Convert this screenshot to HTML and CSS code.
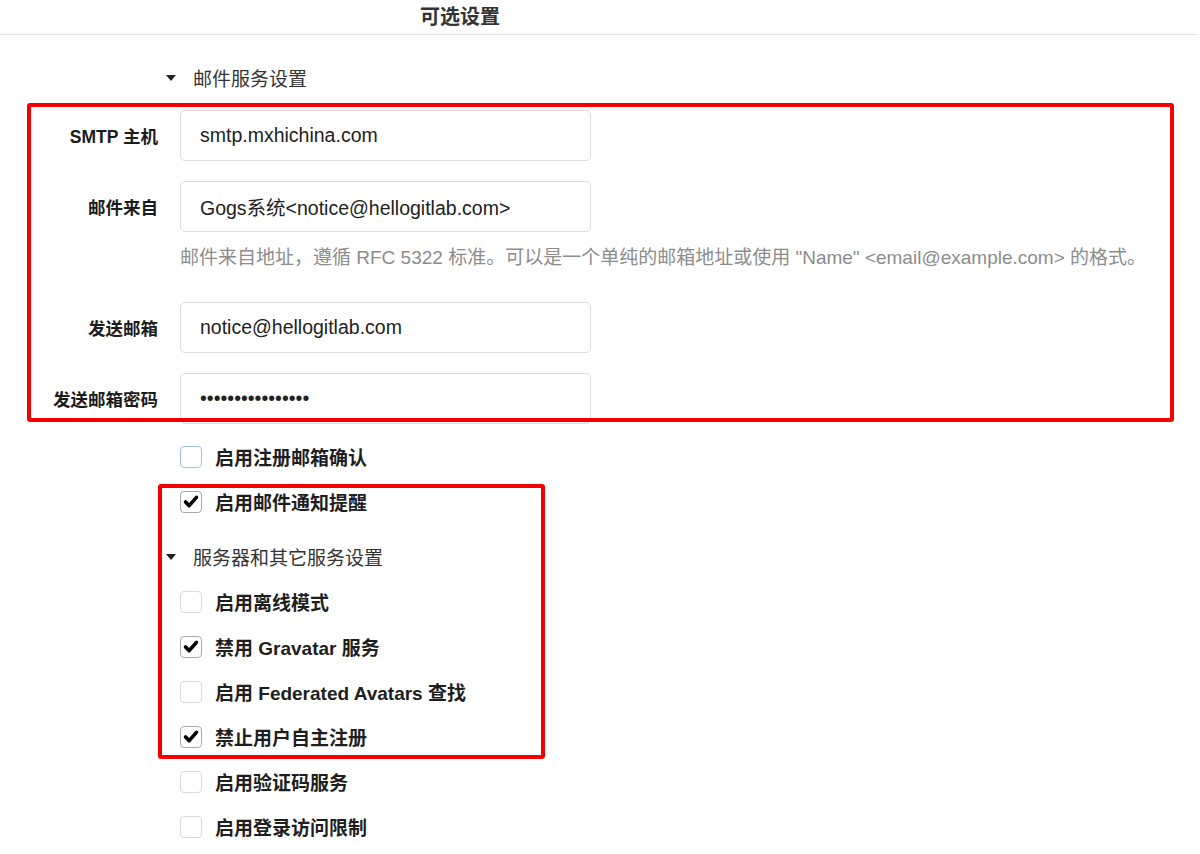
FILE: index.html
```html
<!DOCTYPE html>
<html lang="zh-CN">

<head>
    <meta charset="UTF-8">
    <meta name="viewport" content="width=device-width, initial-scale=1.0">
    <title>可选设置</title>
    <link rel="stylesheet" href="styles.css">
</head>

<body>
    <div class="page">
        <h3 class="page-header">可选设置</h3>

        <div class="section-title"><i class="caret"></i>邮件服务设置</div>

        <div class="fields">
            <div class="field">
                <label>SMTP 主机</label>
                <input type="text" value="smtp.mxhichina.com">
            </div>
            <div class="field">
                <label>邮件来自</label>
                <input type="text" value="Gogs系统<notice@hellogitlab.com>">
            </div>
            <p class="help">邮件来自地址，遵循 RFC 5322 标准。可以是一个单纯的邮箱地址或使用 "Name" &lt;email@example.com&gt; 的格式。</p>
            <div class="field">
                <label>发送邮箱</label>
                <input type="text" value="notice@hellogitlab.com">
            </div>
            <div class="field">
                <label>发送邮箱密码</label>
                <input type="password" value="gogsmailpassword">
            </div>
        </div>

        <div class="checks">
            <div class="check"><span class="box focus"></span>启用注册邮箱确认</div>
            <div class="check"><span class="box checked"><svg viewBox="0 0 22 22"><path d="M5 11.5 L9 15.5 L17 6.5" /></svg></span>启用邮件通知提醒</div>
        </div>

        <div class="section-title second"><i class="caret"></i>服务器和其它服务设置</div>

        <div class="checks no-gap">
            <div class="check"><span class="box"></span>启用离线模式</div>
            <div class="check"><span class="box checked"><svg viewBox="0 0 22 22"><path d="M5 11.5 L9 15.5 L17 6.5" /></svg></span>禁用 Gravatar 服务</div>
            <div class="check"><span class="box"></span>启用 Federated Avatars 查找</div>
            <div class="check"><span class="box checked"><svg viewBox="0 0 22 22"><path d="M5 11.5 L9 15.5 L17 6.5" /></svg></span>禁止用户自主注册</div>
            <div class="check"><span class="box"></span>启用验证码服务</div>
            <div class="check"><span class="box"></span>启用登录访问限制</div>
        </div>

        <!-- 截图上的红色标注框 -->
        <div class="mark mark-mail"></div>
        <div class="mark mark-server"></div>
    </div>
</body>

</html>
```

FILE: styles.css
```css
body {
    margin: 0;
    font-family: "Liberation Sans", "Noto Sans CJK SC", sans-serif;
    color: #222;
    background: #fff;
}

.page {
    position: relative;
    overflow: hidden;
}

.page-header {
    margin: 0;
    height: 34px;
    line-height: 34px;
    padding-left: 420px;
    font-size: 20px;
    font-weight: bold;
    color: #333;
    border-bottom: 1px solid #e2e2e2;
    margin-right: 2px;
}

/* 折叠标题 */
.section-title {
    height: 45px;
    display: flex;
    align-items: center;
    padding-left: 166px;
    margin-top: 20px;
    font-size: 19px;
    color: #333;
}

.section-title.second {
    margin-top: 10px;
}

.caret {
    width: 0;
    height: 0;
    border-left: 5px solid transparent;
    border-right: 5px solid transparent;
    border-top: 6px solid #222;
    margin-right: 17px;
}

.fields {
    margin-top: 10px;
}

.field {
    display: flex;
    align-items: center;
    margin-bottom: 20px;
}

.fields .field:last-child {
    margin-bottom: 0;
}

/* label 宽 180，文字右对齐到 158 */
.field label {
    width: 180px;
    flex-shrink: 0;
    padding-right: 22px;
    box-sizing: border-box;
    text-align: right;
    font-size: 17.5px;
    font-weight: bold;
    color: #1b1c1d;
}

.field input {
    width: 411px;
    height: 51px;
    box-sizing: border-box;
    padding: 0 19px;
    border: 1px solid #dcdcdd;
    border-radius: 5px;
    font-family: inherit;
    font-size: 19.5px;
    color: #222;
    outline: none;
}

.help {
    margin: -6px 0 32px 180px;
    line-height: 24px;
    font-size: 19px;
    color: #8c8c8c;
    white-space: nowrap;
}

.checks {
    margin-top: 10px;
}

.checks.no-gap {
    margin-top: 0;
}

.check {
    height: 45px;
    display: flex;
    align-items: center;
    padding-left: 180px;
    font-size: 19px;
    font-weight: bold;
    color: #1e1e1e;
}

.box {
    width: 22px;
    height: 22px;
    box-sizing: border-box;
    border: 1px solid #dadadb;
    border-radius: 4px;
    margin-right: 13px;
    display: flex;
    align-items: center;
    justify-content: center;
}

.box.focus {
    border-color: #96c8da;
}

.box.checked {
    border-color: #a9a9aa;
}

.box svg {
    width: 21px;
    height: 21px;
}

.box svg path {
    fill: none;
    stroke: #000;
    stroke-width: 4;
    stroke-linecap: round;
    stroke-linejoin: round;
}

/* 红色标注框 */
.mark {
    position: absolute;
    box-sizing: border-box;
    border: 4px solid #f40000;
    border-radius: 3px;
}

.mark-mail {
    left: 27px;
    top: 103px;
    width: 1147px;
    height: 319px;
}

.mark-server {
    left: 158px;
    top: 484px;
    width: 387px;
    height: 275px;
}
```
